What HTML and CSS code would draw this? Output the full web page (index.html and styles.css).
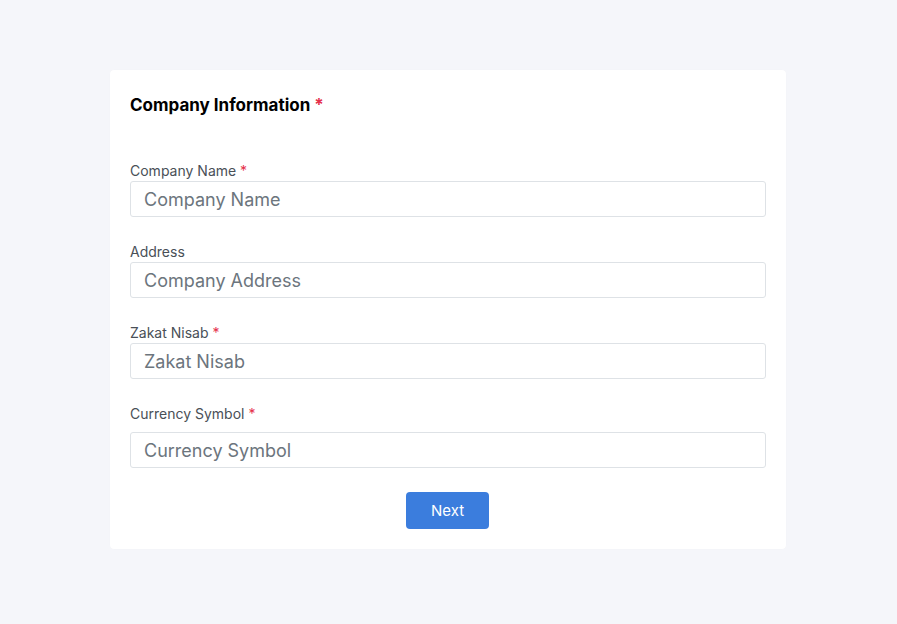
FILE: index.html
```html
<!DOCTYPE html>
<html>
<head>
<meta charset="utf-8">
<link rel="stylesheet" href="styles.css">
</head>
<body>
<div class="page">
  <form class="card">
    <h2 class="title">Company Information <span class="req">*</span></h2>
    <div class="field">
      <label class="label">Company Name <span class="req">*</span></label>
      <input class="input" placeholder="Company Name">
    </div>
    <div class="field">
      <label class="label">Address</label>
      <input class="input" placeholder="Company Address">
    </div>
    <div class="field">
      <label class="label">Zakat Nisab <span class="req">*</span></label>
      <input class="input" placeholder="Zakat Nisab">
    </div>
    <div class="field field-wide">
      <label class="label">Currency Symbol <span class="req">*</span></label>
      <input class="input" placeholder="Currency Symbol">
    </div>
    <div class="actions">
      <button type="button" class="btn">Next</button>
    </div>
  </form>
</div>
</body>
</html>
```
FILE: styles.css
```css
* { box-sizing: border-box; }
html, body { margin: 0; padding: 0; }
body {
  background: #f5f6fa;
  font-family: Inter, "Noto Sans", sans-serif;
  width: 897px;
  height: 624px;
}
.page {
  padding: 70px 111px 0 110px;
}
.card {
  background: #fff;
  border-radius: 4px;
  padding: 20px 20px 20px 20px;
  box-shadow: 0 0 1px rgba(0,0,0,0.04);
}
.title {
  margin: 3px 0 44px;
  font-size: 17px;
  line-height: 24px;
  font-weight: 700;
  color: #000;
}
.req { color: #e5304a; }
.field {
  display: flex;
  flex-direction: column;
  margin-bottom: 25px;
}
.label {
  font-size: 14px;
  line-height: 20px;
  color: #495057;
}
.field-wide .label { margin-bottom: 8px; }
.input {
  height: 36px;
  border: 1px solid #dee2e6;
  border-radius: 3px;
  padding: 0 13px;
  font-family: inherit;
  font-size: 18px;
  color: #212529;
  outline: none;
}
.input::placeholder { color: #6c757d; }
.field-wide { margin-bottom: 24px; }
.actions {
  display: flex;
  justify-content: center;
}
.btn {
  width: 83px;
  height: 37px;
  margin-right: 1px;
  background: #3b7ddd;
  color: #fff;
  border: none;
  border-radius: 4px;
  font-family: inherit;
  font-size: 15px;
}
```
